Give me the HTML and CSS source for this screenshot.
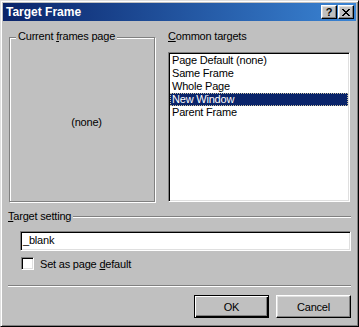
FILE: index.html
```html
<!DOCTYPE html>
<html>
<head>
<meta charset="utf-8">
<link rel="stylesheet" href="styles.css">
</head>
<body>
<div class="window">
  <div class="titlebar">
    <span class="title">Target Frame</span>
    <div class="caps">
      <span class="capbtn help">?</span>
      <span class="capbtn close"><svg width="8" height="7" viewBox="0 0 8 7" shape-rendering="crispEdges"><path d="M0 0h2v1H0z M6 0h2v1H6z M1 1h2v1H1z M5 1h2v1H5z M2 2h4v1H2z M3 3h2v1H3z M2 4h4v1H2z M1 5h2v1H1z M5 5h2v1H5z M0 6h2v1H0z M6 6h2v1H6z" fill="#000"/></svg></span>
    </div>
  </div>
  <div class="content">
    <div class="row1">
      <div class="group">
        <span class="legend">Current <u>f</u>rames page</span>
        <div class="none">(none)</div>
      </div>
      <div class="targets">
        <div class="label"><u>C</u>ommon targets</div>
        <ul class="listbox">
          <li>Page Default (none)</li>
          <li>Same Frame</li>
          <li>Whole Page</li>
          <li class="sel">New Window</li>
          <li>Parent Frame</li>
        </ul>
      </div>
    </div>
    <div class="setting-row">
      <span class="setting-label"><u>T</u>arget setting</span>
      <span class="etch"></span>
    </div>
    <div class="input">_blank</div>
    <div class="check"><span class="box"></span><span>Set as page <u>d</u>efault</span></div>
    <div class="separator"></div>
    <div class="buttons">
      <button class="btn default">OK</button>
      <button class="btn">Cancel</button>
    </div>
  </div>
</div>
</body>
</html>
```

FILE: styles.css
```css
html, body {
  margin: 0;
  background: #000;
}
body {
  font-family: "Liberation Sans", Arial, sans-serif;
  font-size: 11px;
  letter-spacing: -0.2px;
  color: #000;
}
.window {
  width: 359px;
  height: 327px;
  box-sizing: border-box;
  background: #c0c0c0;
  border: 1px solid;
  border-color: #dfdfdf #000 #000 #dfdfdf;
  box-shadow: inset 1px 1px #fff, inset -1px -1px #808080;
  padding: 2px;
  display: flex;
  flex-direction: column;
}
.titlebar {
  height: 18px;
  flex: none;
  display: flex;
  align-items: center;
  padding: 0 2px 0 3px;
  background: linear-gradient(to right, #0a246a, #3a84d4);
  color: #fff;
}
.title {
  font-weight: bold;
  font-size: 12px;
  letter-spacing: 0;
}
.caps {
  margin-left: auto;
  display: flex;
  gap: 1px;
}
.capbtn {
  width: 16px;
  height: 14px;
  box-sizing: border-box;
  background: #c0c0c0;
  border: 1px solid;
  border-color: #fff #000 #000 #fff;
  box-shadow: inset -1px -1px #808080, inset 1px 1px #dfdfdf;
  display: flex;
  align-items: center;
  justify-content: center;
  color: #000;
  font-weight: bold;
  font-size: 11px;
  line-height: 12px;
}
.content {
  flex: 1;
  display: flex;
  flex-direction: column;
  padding: 0 5px;
}
.row1 {
  display: flex;
  align-items: flex-start;
  margin-top: 16px;
}
.group {
  margin-left: 1px;
  width: 146px;
  height: 165px;
  box-sizing: border-box;
  border: 1px solid #808080;
  box-shadow: 1px 1px #fff, inset 1px 1px #fff;
  display: flex;
  flex-direction: column;
}
.legend {
  align-self: flex-start;
  margin: -8px 0 0 6px;
  padding: 0 2px;
  background: #c0c0c0;
  line-height: 13px;
}
.none {
  flex: 1;
  display: flex;
  align-items: center;
  justify-content: center;
  padding-left: 9px;
}
.targets {
  margin: -7px 0 0 13px;
  width: 182px;
}
.label {
  line-height: 13px;
}
.listbox {
  list-style: none;
  margin: 9px 0 0;
  padding: 0;
  height: 150px;
  box-sizing: border-box;
  background: #fff;
  border: 1px solid;
  border-color: #808080 #fff #fff #808080;
  box-shadow: inset 1px 1px #000, inset -1px -1px #dfdfdf;
  padding: 1px 1px;
}
.listbox li {
  line-height: 13px;
  padding-left: 2px;
  white-space: nowrap;
}
.listbox li.sel {
  background: #0a246a;
  color: #fff;
  outline: 1px dotted #c8c0a0;
  outline-offset: -1px;
}
.setting-row {
  display: flex;
  align-items: flex-start;
  margin-top: 8px;
  height: 13px;
}
.setting-label {
  line-height: 13px;
}
.etch {
  flex: 1;
  margin: 6px 0 0 2px;
  border-top: 1px solid #808080;
  border-bottom: 1px solid #fff;
}
.input {
  margin: 8px 0 0 12px;
  height: 20px;
  box-sizing: border-box;
  background: #fff;
  border: 1px solid;
  border-color: #808080 #fff #fff #808080;
  box-shadow: inset 1px 1px #000, inset -1px -1px #dfdfdf;
  padding: 0 2px;
  line-height: 17px;
}
.check {
  display: flex;
  align-items: center;
  gap: 6px;
  margin: 6px 0 0 13px;
  height: 13px;
}
.box {
  width: 13px;
  height: 13px;
  box-sizing: border-box;
  background: #fff;
  border: 1px solid;
  border-color: #808080 #fff #fff #808080;
  box-shadow: inset 1px 1px #000, inset -1px -1px #dfdfdf;
}
.separator {
  margin-top: 15px;
  border-top: 1px solid #808080;
  border-bottom: 1px solid #fff;
}
.buttons {
  display: flex;
  justify-content: flex-end;
  gap: 7px;
  margin-top: 8px;
}
.btn {
  width: 75px;
  height: 23px;
  box-sizing: border-box;
  font: inherit;
  letter-spacing: inherit;
  color: #000;
  background: #c0c0c0;
  border: 1px solid;
  border-color: #fff #000 #000 #fff;
  box-shadow: inset -1px -1px #808080, inset 1px 1px #dfdfdf;
  padding: 0;
}
.btn.default {
  border-color: #000;
  box-shadow: inset 1px 1px #fff, inset -1px -1px #000, inset -2px -2px #808080;
}
```
